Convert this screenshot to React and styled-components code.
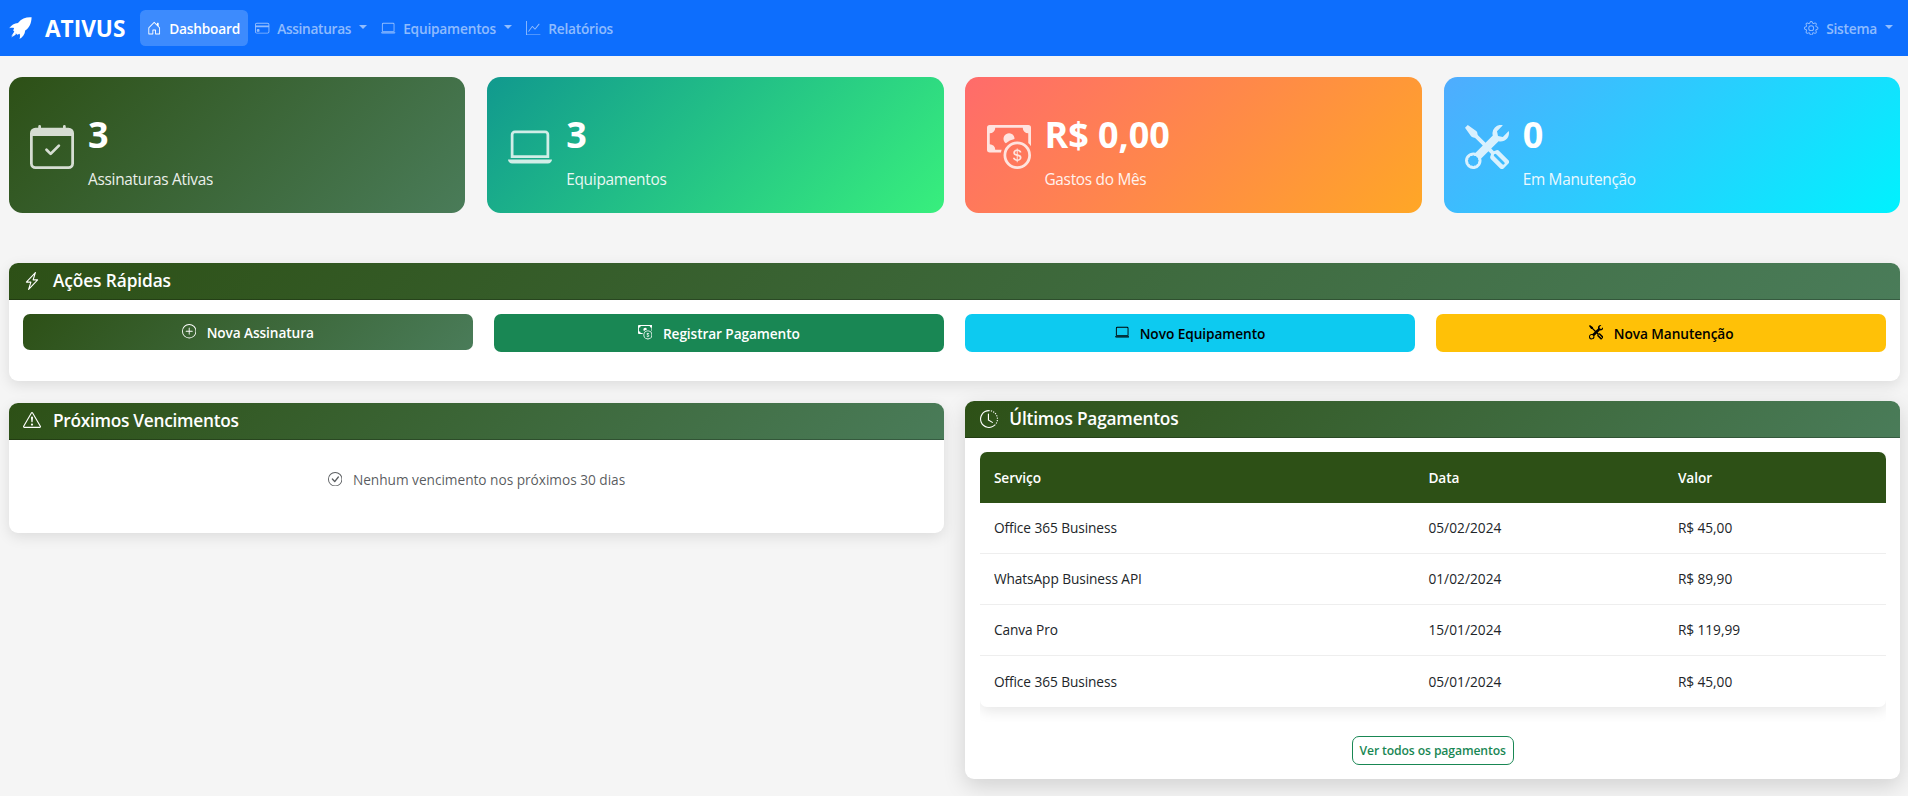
import React from 'react';
import styled, { createGlobalStyle } from 'styled-components';
import {
  BsHouseDoor, BsCreditCard, BsLaptop, BsGraphUp, BsGear, BsCalendarCheck,
  BsCashCoin, BsTools, BsLightningCharge, BsPlusCircle, BsExclamationTriangle, BsClockHistory, BsCheckCircle,
} from 'react-icons/bs';

const GlobalStyle = createGlobalStyle`
  *, *::before, *::after { box-sizing: border-box; }
  html, body { margin: 0; height: 100%; overflow: hidden; }
  body {
    background: #f5f5f5;
    color: #212529;
    font: 400 13.7px/21.6px "Segoe UI", "Open Sans", "Noto Sans", sans-serif;
  }
  svg { display: block; flex: none; }
`;

const GREEN = 'linear-gradient(135deg, #2d5016 0%, #4a7c59 100%)';

const Text = styled.span`
  white-space: nowrap;
  letter-spacing: ${(p) => p.$ls ?? -0.08}px;
`;

const Navbar = styled.nav`
  height: 56px;
  padding: 0 8px 0 9px;
  display: flex;
  align-items: center;
  background: #0d6efd;
`;

const Brand = styled.a`
  display: flex;
  align-items: center;
  gap: 13px;
  width: 131px;
  color: #fff;
  font-size: 22.6px;
  font-weight: 700;
  span { padding-top: 2px; }
`;

const NavLink = styled.a`
  display: flex;
  align-items: center;
  height: 36px;
  padding: 0 7.2px;
  border-radius: 5.4px;
  font-weight: 600;
  color: ${(p) => (p.$active ? '#fff' : 'rgba(255,255,255,.55)')};
  background: ${(p) => (p.$active ? 'rgba(255,255,255,.2)' : 'none')};
  width: ${(p) => p.$w}px;
  margin-left: ${(p) => p.$push || '0'};
  gap: 7.6px;
  span { padding-top: 1px; }
`;

const Caret = styled.i`
  border: 4.3px solid transparent;
  border-top-color: currentColor;
  border-bottom: 0;
  margin-top: -2px;
`;

const Page = styled.main`
  padding: 21px 8px 0 9px;
  display: flex;
  flex-direction: column;
`;

const Grid4 = styled.div`
  display: grid;
  grid-template-columns: repeat(4, 1fr);
  column-gap: ${(p) => p.$gap || 21.6}px;
  align-items: start;
`;

const Stat = styled.div`
  height: 136px;
  border-radius: 13.5px;
  padding: 3px 21.2px 0;
  display: flex;
  align-items: center;
  gap: 13.8px;
  color: #fff;
  background: linear-gradient(135deg, ${(p) => p.$from} 0%, ${(p) => p.$to} 100%);
  svg { opacity: .8; }
`;

const StatBody = styled.div`
  display: flex;
  flex-direction: column;
  padding-top: 11px;
`;

const StatValue = styled(Text)`
  font-size: 36px;
  line-height: 43px;
  font-weight: 700;
`;

const StatLabel = styled(Text)`
  font-size: 15.4px;
  line-height: 24px;
  margin-top: 12px;
  opacity: .9;
`;

const Card = styled.section`
  background: #fff;
  border-radius: 9px;
  height: ${(p) => p.$h}px;
  margin-top: ${(p) => p.$mt || 0}px;
  box-shadow: ${(p) => (p.$raised ? '0 7px 22px rgba(0,0,0,.15)' : '0 4px 14px rgba(0,0,0,.1)')};
`;

const CardHeader = styled.header`
  height: 37px;
  padding: 0 14.4px 1px;
  display: flex;
  align-items: center;
  gap: 11.6px;
  color: #fff;
  font-size: 17.3px;
  font-weight: 600;
  border-radius: 9px 9px 0 0;
  border-bottom: 1px solid rgba(0,0,0,.25);
  background: ${GREEN};
  background-origin: border-box;
`;

const Actions = styled(Grid4)`
  padding: 14px;
`;

const Action = styled.a`
  height: ${(p) => p.$h || 38}px;
  border-radius: 7px;
  display: flex;
  align-items: center;
  justify-content: center;
  gap: 10.5px;
  font-weight: 600;
  color: ${(p) => p.$fg || '#fff'};
  background: ${(p) => p.$bg};
  span { padding-top: 1.5px; }
  svg { margin-top: -1px; }
`;

const Columns = styled.div`
  display: grid;
  grid-template-columns: 1fr 1fr;
  column-gap: 21.6px;
  align-items: start;
  margin-top: 20.3px;
`;

const Empty = styled.div`
  display: flex;
  justify-content: center;
  align-items: center;
  gap: 11px;
  padding-top: 29px;
  color: rgba(33,37,41,.75);
  svg { margin-top: -2px; }
`;

const PayBody = styled.div`
  padding: 14px 14.4px;
  display: flex;
  flex-direction: column;
  align-items: center;
`;

const TableClip = styled.div`
  width: 100%;
  overflow: hidden;
  padding-bottom: 15px;
`;

const Table = styled.div`
  border-radius: 7px;
  box-shadow: 0 4px 14px rgba(0,0,0,.1);
`;

const Row = styled.div`
  display: grid;
  grid-template-columns: 434.5px 249.5px 1fr;
  height: 51.1px;
  align-items: center;
  border-bottom: ${(p) => (p.$last ? 0 : '1px solid #eee')};
  > * { padding-left: 14.2px; }
`;

const HeadRow = styled(Row)`
  height: 50.5px;
  border: 0;
  color: #fff;
  font-weight: 600;
  background: #2d5016;
  border-radius: 7px 7px 0 0;
`;

const MoreButton = styled.a`
  margin-top: 14px;
  height: 28.6px;
  width: 162px;
  display: flex;
  align-items: center;
  justify-content: center;
  border: 1px solid #198754;
  border-radius: 7px;
  color: #198754;
  font-size: 12.2px;
  font-weight: 600;
`;

const Rocket = () => (
  <svg width="23" height="23" viewBox="0 0 23 23" fill="currentColor" aria-hidden="true">
    <path d="M22.6.3C17.4-.1 12.6 1.5 9 5.9 5.4 6 2.2 8.200.2 11.200c1.700-.5 3.300-.5 4.900-.1l-.9 2.400 1.100 1.100-3.100 4.900 4.800-3 1.300 1.200 2.300-1c.6 1.700.5 3.400-.1 5.200 3.200-1.500 5.400-4.600 5.700-8.300C20.300 11.200 22.400 6.200 22.600.3Z" />
    <path d="M5.700 16.200 2.300 20.600 6.900 17.400Z" />
  </svg>
);

const stats = [
  { icon: BsCalendarCheck, value: '3', label: 'Assinaturas Ativas', from: '#2d5016', to: '#4a7c59' },
  { icon: BsLaptop, value: '3', label: 'Equipamentos', from: '#11998e', to: '#38ef7d' },
  { icon: BsCashCoin, value: 'R$ 0,00', label: 'Gastos do Mês', from: '#ff6b6b', to: '#ffa726' },
  { icon: BsTools, value: '0', label: 'Em Manutenção', from: '#4facfe', to: '#00f2fe' },
];

const payments = [
  ['Office 365 Business', '05/02/2024', 'R$ 45,00'],
  ['WhatsApp Business API', '01/02/2024', 'R$ 89,90'],
  ['Canva Pro', '15/01/2024', 'R$ 119,99'],
  ['Office 365 Business', '05/01/2024', 'R$ 45,00'],
];

const columnSpacing = [-0.08, 0.04, -0.05];

export default function App() {
  return (
    <>
      <GlobalStyle />
      <Navbar>
        <Brand><Rocket /><Text $ls={0}>ATIVUS</Text></Brand>
        <NavLink $active $w={108}><BsHouseDoor size={14.4} /><Text $ls={-0.2}>Dashboard</Text></NavLink>
        <NavLink $w={126}><BsCreditCard size={14.4} /><Text $ls={-0.32}>Assinaturas</Text><Caret /></NavLink>
        <NavLink $w={145}><BsLaptop size={14.4} /><Text $ls={-0.2}>Equipamentos</Text><Caret /></NavLink>
        <NavLink $w={110}><BsGraphUp size={14.4} /><Text $ls={-0.2}>Relatórios</Text></NavLink>
        <NavLink $w={103} $push="auto"><BsGear size={14.4} /><Text $ls={-0.2}>Sistema</Text><Caret /></NavLink>
      </Navbar>
      <Page>
        <Grid4 $gap={21.9}>
          {stats.map((s) => (
            <Stat key={s.label} $from={s.from} $to={s.to}>
              <s.icon size={44} />
              <StatBody>
                <StatValue $ls={-0.05}>{s.value}</StatValue>
                <StatLabel $ls={-0.28}>{s.label}</StatLabel>
              </StatBody>
            </Stat>
          ))}
        </Grid4>
        <Card $h={118} $mt={50}>
          <CardHeader><BsLightningCharge size={18} /><Text $ls={-0.1}>Ações Rápidas</Text></CardHeader>
          <Actions>
            <Action $h={36} $bg={GREEN}><BsPlusCircle size={14.4} /><Text $ls={-0.1}>Nova Assinatura</Text></Action>
            <Action $bg="#198754"><BsCashCoin size={14.4} /><Text $ls={-0.1}>Registrar Pagamento</Text></Action>
            <Action $bg="#0dcaf0" $fg="#000"><BsLaptop size={14.4} /><Text>Novo Equipamento</Text></Action>
            <Action $bg="#ffc107" $fg="#000"><BsTools size={14.4} /><Text>Nova Manutenção</Text></Action>
          </Actions>
        </Card>
        <Columns>
          <Card $h={130} $mt={1.7}>
            <CardHeader><BsExclamationTriangle size={18} /><Text $ls={-0.28}>Próximos Vencimentos</Text></CardHeader>
            <Empty><BsCheckCircle size={14.4} /><Text $ls={-0.03}>Nenhum vencimento nos próximos 30 dias</Text></Empty>
          </Card>
          <Card $h={377.7} $raised>
            <CardHeader><BsClockHistory size={18} /><Text $ls={-0.2}>Últimos Pagamentos</Text></CardHeader>
            <PayBody>
              <TableClip>
                <Table>
                  <HeadRow><Text>Serviço</Text><Text>Data</Text><Text>Valor</Text></HeadRow>
                  {payments.map((r, i) => (
                    <Row key={i} $last={i === payments.length - 1}>
                      {r.map((c, j) => <Text key={c} $ls={columnSpacing[j]}>{c}</Text>)}
                    </Row>
                  ))}
                </Table>
              </TableClip>
              <MoreButton><Text $ls={-0.12}>Ver todos os pagamentos</Text></MoreButton>
            </PayBody>
          </Card>
        </Columns>
      </Page>
    </>
  );
}
